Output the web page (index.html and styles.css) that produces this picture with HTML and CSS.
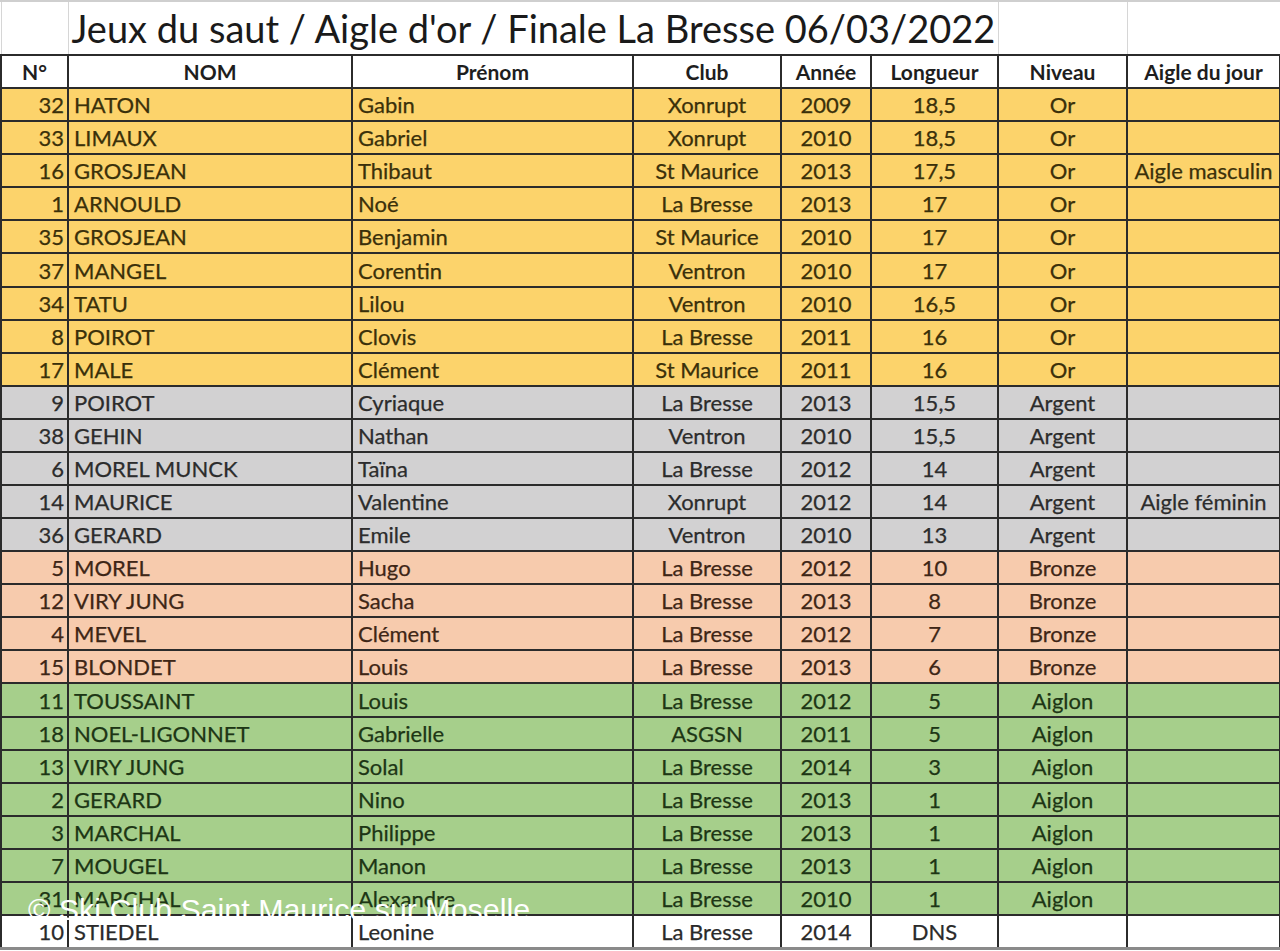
FILE: index.html
```html
<!DOCTYPE html>
<html lang="fr">
<head>
<meta charset="utf-8">
<title>Jeux du saut / Aigle d'or / Finale La Bresse 06/03/2022</title>
<link rel="stylesheet" href="styles.css">
</head>
<body>
<div class="sheet">
<table class="grid">
<colgroup>
<col class="c-num"><col class="c-nom"><col class="c-prenom"><col class="c-club"><col class="c-annee"><col class="c-long"><col class="c-niv"><col class="c-aigle">
</colgroup>
<tbody>
<tr class="title-row">
<td class="blank"></td>
<td class="title" colspan="5">Jeux du saut / Aigle d'or / Finale La Bresse 06/03/2022</td>
<td class="blank"></td>
<td class="blank"></td>
</tr>
<tr class="head">
<th>N°</th><th>NOM</th><th>Prénom</th><th>Club</th><th>Année</th><th>Longueur</th><th>Niveau</th><th>Aigle du jour</th>
</tr>
<tr class="or"><td class="n">32</td><td class="l">HATON</td><td class="l">Gabin</td><td>Xonrupt</td><td>2009</td><td>18,5</td><td>Or</td><td></td></tr>
<tr class="or"><td class="n">33</td><td class="l">LIMAUX</td><td class="l">Gabriel</td><td>Xonrupt</td><td>2010</td><td>18,5</td><td>Or</td><td></td></tr>
<tr class="or"><td class="n">16</td><td class="l">GROSJEAN</td><td class="l">Thibaut</td><td>St Maurice</td><td>2013</td><td>17,5</td><td>Or</td><td>Aigle masculin</td></tr>
<tr class="or"><td class="n">1</td><td class="l">ARNOULD</td><td class="l">Noé</td><td>La Bresse</td><td>2013</td><td>17</td><td>Or</td><td></td></tr>
<tr class="or"><td class="n">35</td><td class="l">GROSJEAN</td><td class="l">Benjamin</td><td>St Maurice</td><td>2010</td><td>17</td><td>Or</td><td></td></tr>
<tr class="or"><td class="n">37</td><td class="l">MANGEL</td><td class="l">Corentin</td><td>Ventron</td><td>2010</td><td>17</td><td>Or</td><td></td></tr>
<tr class="or"><td class="n">34</td><td class="l">TATU</td><td class="l">Lilou</td><td>Ventron</td><td>2010</td><td>16,5</td><td>Or</td><td></td></tr>
<tr class="or"><td class="n">8</td><td class="l">POIROT</td><td class="l">Clovis</td><td>La Bresse</td><td>2011</td><td>16</td><td>Or</td><td></td></tr>
<tr class="or"><td class="n">17</td><td class="l">MALE</td><td class="l">Clément</td><td>St Maurice</td><td>2011</td><td>16</td><td>Or</td><td></td></tr>
<tr class="argent"><td class="n">9</td><td class="l">POIROT</td><td class="l">Cyriaque</td><td>La Bresse</td><td>2013</td><td>15,5</td><td>Argent</td><td></td></tr>
<tr class="argent"><td class="n">38</td><td class="l">GEHIN</td><td class="l">Nathan</td><td>Ventron</td><td>2010</td><td>15,5</td><td>Argent</td><td></td></tr>
<tr class="argent"><td class="n">6</td><td class="l">MOREL MUNCK</td><td class="l">Taïna</td><td>La Bresse</td><td>2012</td><td>14</td><td>Argent</td><td></td></tr>
<tr class="argent"><td class="n">14</td><td class="l">MAURICE</td><td class="l">Valentine</td><td>Xonrupt</td><td>2012</td><td>14</td><td>Argent</td><td>Aigle féminin</td></tr>
<tr class="argent"><td class="n">36</td><td class="l">GERARD</td><td class="l">Emile</td><td>Ventron</td><td>2010</td><td>13</td><td>Argent</td><td></td></tr>
<tr class="bronze"><td class="n">5</td><td class="l">MOREL</td><td class="l">Hugo</td><td>La Bresse</td><td>2012</td><td>10</td><td>Bronze</td><td></td></tr>
<tr class="bronze"><td class="n">12</td><td class="l">VIRY JUNG</td><td class="l">Sacha</td><td>La Bresse</td><td>2013</td><td>8</td><td>Bronze</td><td></td></tr>
<tr class="bronze"><td class="n">4</td><td class="l">MEVEL</td><td class="l">Clément</td><td>La Bresse</td><td>2012</td><td>7</td><td>Bronze</td><td></td></tr>
<tr class="bronze"><td class="n">15</td><td class="l">BLONDET</td><td class="l">Louis</td><td>La Bresse</td><td>2013</td><td>6</td><td>Bronze</td><td></td></tr>
<tr class="aiglon"><td class="n">11</td><td class="l">TOUSSAINT</td><td class="l">Louis</td><td>La Bresse</td><td>2012</td><td>5</td><td>Aiglon</td><td></td></tr>
<tr class="aiglon"><td class="n">18</td><td class="l">NOEL-LIGONNET</td><td class="l">Gabrielle</td><td>ASGSN</td><td>2011</td><td>5</td><td>Aiglon</td><td></td></tr>
<tr class="aiglon"><td class="n">13</td><td class="l">VIRY JUNG</td><td class="l">Solal</td><td>La Bresse</td><td>2014</td><td>3</td><td>Aiglon</td><td></td></tr>
<tr class="aiglon"><td class="n">2</td><td class="l">GERARD</td><td class="l">Nino</td><td>La Bresse</td><td>2013</td><td>1</td><td>Aiglon</td><td></td></tr>
<tr class="aiglon"><td class="n">3</td><td class="l">MARCHAL</td><td class="l">Philippe</td><td>La Bresse</td><td>2013</td><td>1</td><td>Aiglon</td><td></td></tr>
<tr class="aiglon"><td class="n">7</td><td class="l">MOUGEL</td><td class="l">Manon</td><td>La Bresse</td><td>2013</td><td>1</td><td>Aiglon</td><td></td></tr>
<tr class="aiglon"><td class="n">31</td><td class="l">MARCHAL</td><td class="l">Alexandre</td><td>La Bresse</td><td>2010</td><td>1</td><td>Aiglon</td><td></td></tr>
<tr class="dns"><td class="n">10</td><td class="l">STIEDEL</td><td class="l">Leonine</td><td>La Bresse</td><td>2014</td><td>DNS</td><td></td><td></td></tr>
</tbody>
</table>
<div class="watermark">© Ski Club Saint Maurice sur Moselle</div>
</div>
</body>
</html>
```
FILE: styles.css
```css
html, body {
  margin: 0;
  padding: 0;
  background: #ffffff;
}
body {
  width: 1280px;
  height: 951px;
  overflow: hidden;
}
.sheet {
  position: relative;
  width: 1280px;
  border-top: 2px solid #cfcfcf;
}
.grid {
  border-collapse: collapse;
  table-layout: fixed;
  width: 1279px;
  font-family: Lato, "Liberation Sans", sans-serif;
  font-size: 22px;
  color: #2a2a2a;
}
.c-num { width: 67px; }
.c-nom { width: 284px; }
.c-prenom { width: 281px; }
.c-club { width: 148px; }
.c-annee { width: 90px; }
.c-long { width: 127px; }
.c-niv { width: 129px; }
.c-aigle { width: 153px; }

.grid td, .grid th {
  height: 31.08px;
  padding: 0 4px;
  border: 2px solid #2b2b2b;
  text-align: center;
  white-space: nowrap;
  overflow: hidden;
  line-height: 29px;
  -webkit-text-stroke: 0.25px currentColor;
}
.grid th {
  font-weight: 700;
  font-size: 21px;
  color: #1e1e1e;
  background: #ffffff;
  -webkit-text-stroke: 0;
}
.grid td.n { text-align: right; padding-right: 3px; }
.grid td.l { text-align: left; padding-left: 5px; }

.title-row td {
  height: 52px;
  border: 1px solid #d6d6d6;
  border-bottom: 2px solid #2b2b2b;
  border-top: none;
  -webkit-text-stroke: 0;
}
.grid td.title {
  text-align: left;
  padding-left: 3px;
  font-size: 38px;
  color: #1a1a1a;
  letter-spacing: 0;
  line-height: 52px;
}

.or td { background: #fcd36b; color: #3a300a; }
.argent td { background: #d2d1d2; color: #2c2c2c; }
.bronze td { background: #f7cbad; color: #3e2616; }
.aiglon td { background: #a6cf8b; color: #1d3615; }
.dns td { background: #ffffff; color: #2a2a2a; border-bottom: 3px solid #8a8a8a; }

.watermark {
  position: absolute;
  left: 28px;
  top: 890px;
  font-family: "Liberation Sans", Arial, sans-serif;
  font-size: 30.4px;
  line-height: 34px;
  color: #ffffff;
  white-space: nowrap;
}
```
